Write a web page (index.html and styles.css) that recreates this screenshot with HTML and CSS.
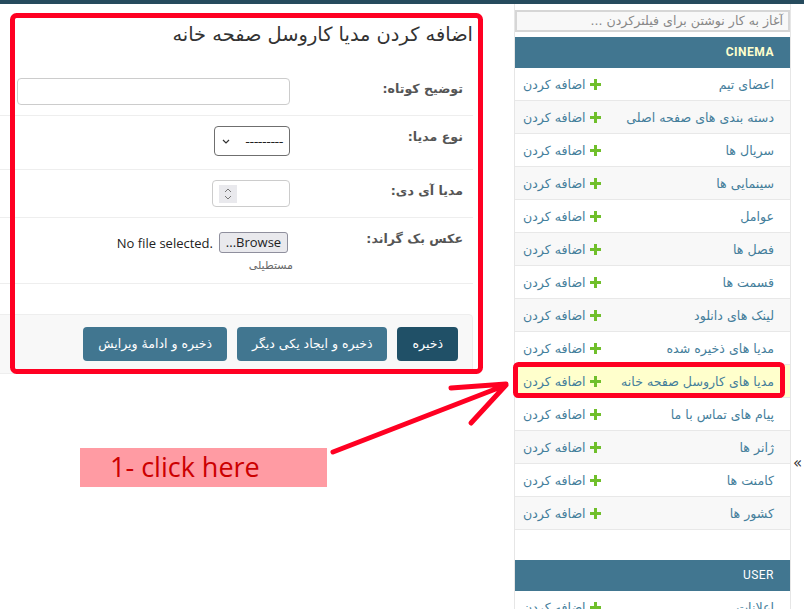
FILE: index.html
```html
<!DOCTYPE html>
<html lang="fa">
<head>
<meta charset="utf-8">
<title>اضافه کردن مدیا کاروسل صفحه خانه</title>
<link rel="stylesheet" href="styles.css">
</head>
<body>
<div class="topbar"></div>
<div class="page">
  <main class="content" dir="rtl">
    <h1 class="title">اضافه کردن مدیا کاروسل صفحه خانه</h1>
    <form class="form">
      <fieldset class="fieldset">
        <div class="form-row row-desc">
          <label class="label">توضیح کوتاه:</label>
          <div class="field"><div class="text-input"></div></div>
        </div>
        <div class="form-row row-type">
          <label class="label">نوع مدیا:</label>
          <div class="field">
            <div class="select"><span class="select-value">---------</span>
              <svg class="chev" width="8" height="5" viewBox="0 0 8 5"><path d="M1 1l3 3 3-3" fill="none" stroke="#333" stroke-width="1.2"/></svg>
            </div>
          </div>
        </div>
        <div class="form-row row-id">
          <label class="label">مدیا آی دی:</label>
          <div class="field">
            <div class="number-input"><span class="spinner">
              <svg width="18" height="18" viewBox="0 0 18 18"><path d="M6 7l3-3 3 3M6 11l3 3 3-3" fill="none" stroke="#777" stroke-width="1"/></svg>
            </span></div>
          </div>
        </div>
        <div class="form-row row-file">
          <label class="label">عکس بک گراند:</label>
          <div class="field file-field">
            <div class="file-line"><span class="browse">Browse...</span><span class="nofile" dir="ltr">No file selected.</span></div>
            <div class="help">مستطیلی</div>
          </div>
        </div>
      </fieldset>
      <div class="submit-row">
        <span class="btn btn-primary">ذخیره</span>
        <span class="btn">ذخیره و ایجاد یکی دیگر</span>
        <span class="btn">ذخیره و ادامهٔ ویرایش</span>
      </div>
    </form>
  </main>
  <nav class="sidebar" dir="rtl">
    <div class="filter">آغاز به کار نوشتن برای فیلترکردن ...</div>
    <div class="module current">
      <div class="caption">Cinema</div>
      <div class="mrow"><span class="name">اعضای تیم</span><span class="add"><svg class="plus" width="11" height="11" viewBox="0 0 11 11"><path d="M4 0h3v4h4v3H7v4H4V7H0V4h4z" fill="#70bf2b"/></svg>اضافه کردن</span></div>
      <div class="mrow"><span class="name">دسته بندی های صفحه اصلی</span><span class="add"><svg class="plus" width="11" height="11" viewBox="0 0 11 11"><path d="M4 0h3v4h4v3H7v4H4V7H0V4h4z" fill="#70bf2b"/></svg>اضافه کردن</span></div>
      <div class="mrow"><span class="name">سریال ها</span><span class="add"><svg class="plus" width="11" height="11" viewBox="0 0 11 11"><path d="M4 0h3v4h4v3H7v4H4V7H0V4h4z" fill="#70bf2b"/></svg>اضافه کردن</span></div>
      <div class="mrow"><span class="name">سینمایی ها</span><span class="add"><svg class="plus" width="11" height="11" viewBox="0 0 11 11"><path d="M4 0h3v4h4v3H7v4H4V7H0V4h4z" fill="#70bf2b"/></svg>اضافه کردن</span></div>
      <div class="mrow"><span class="name">عوامل</span><span class="add"><svg class="plus" width="11" height="11" viewBox="0 0 11 11"><path d="M4 0h3v4h4v3H7v4H4V7H0V4h4z" fill="#70bf2b"/></svg>اضافه کردن</span></div>
      <div class="mrow"><span class="name">فصل ها</span><span class="add"><svg class="plus" width="11" height="11" viewBox="0 0 11 11"><path d="M4 0h3v4h4v3H7v4H4V7H0V4h4z" fill="#70bf2b"/></svg>اضافه کردن</span></div>
      <div class="mrow"><span class="name">قسمت ها</span><span class="add"><svg class="plus" width="11" height="11" viewBox="0 0 11 11"><path d="M4 0h3v4h4v3H7v4H4V7H0V4h4z" fill="#70bf2b"/></svg>اضافه کردن</span></div>
      <div class="mrow"><span class="name">لینک های دانلود</span><span class="add"><svg class="plus" width="11" height="11" viewBox="0 0 11 11"><path d="M4 0h3v4h4v3H7v4H4V7H0V4h4z" fill="#70bf2b"/></svg>اضافه کردن</span></div>
      <div class="mrow"><span class="name">مدیا های ذخیره شده</span><span class="add"><svg class="plus" width="11" height="11" viewBox="0 0 11 11"><path d="M4 0h3v4h4v3H7v4H4V7H0V4h4z" fill="#70bf2b"/></svg>اضافه کردن</span></div>
      <div class="mrow selected"><span class="name">مدیا های کاروسل صفحه خانه</span><span class="add"><svg class="plus" width="11" height="11" viewBox="0 0 11 11"><path d="M4 0h3v4h4v3H7v4H4V7H0V4h4z" fill="#70bf2b"/></svg>اضافه کردن</span></div>
      <div class="mrow"><span class="name">پیام های تماس با ما</span><span class="add"><svg class="plus" width="11" height="11" viewBox="0 0 11 11"><path d="M4 0h3v4h4v3H7v4H4V7H0V4h4z" fill="#70bf2b"/></svg>اضافه کردن</span></div>
      <div class="mrow"><span class="name">ژانر ها</span><span class="add"><svg class="plus" width="11" height="11" viewBox="0 0 11 11"><path d="M4 0h3v4h4v3H7v4H4V7H0V4h4z" fill="#70bf2b"/></svg>اضافه کردن</span></div>
      <div class="mrow"><span class="name">کامنت ها</span><span class="add"><svg class="plus" width="11" height="11" viewBox="0 0 11 11"><path d="M4 0h3v4h4v3H7v4H4V7H0V4h4z" fill="#70bf2b"/></svg>اضافه کردن</span></div>
      <div class="mrow"><span class="name">کشور ها</span><span class="add"><svg class="plus" width="11" height="11" viewBox="0 0 11 11"><path d="M4 0h3v4h4v3H7v4H4V7H0V4h4z" fill="#70bf2b"/></svg>اضافه کردن</span></div>
    </div>
    <div class="module">
      <div class="caption">User</div>
      <div class="mrow"><span class="name">اعلانات</span><span class="add"><svg class="plus" width="11" height="11" viewBox="0 0 11 11"><path d="M4 0h3v4h4v3H7v4H4V7H0V4h4z" fill="#70bf2b"/></svg>اضافه کردن</span></div>
    </div>
  </nav>
  <div class="toggle">«</div>
</div>

<svg class="marks" width="804" height="609" viewBox="0 0 804 609">
  <rect x="12.5" y="15.5" width="468" height="356" rx="4" fill="none" stroke="#ff0022" stroke-width="5"/>
  <rect x="515.5" y="364.5" width="267" height="31" rx="3" fill="none" stroke="#ff0022" stroke-width="5"/>
  <path d="M333 452L506 385M451 388L506 384M471 423L506 385" fill="none" stroke="#ff0022" stroke-width="5" stroke-linecap="round"/>
</svg>
<div class="note">1- click here</div>
</body>
</html>
```

FILE: styles.css
```css
html, body {
  margin: 0;
  padding: 0;
}
body {
  width: 804px;
  height: 609px;
  overflow: hidden;
  background: #fff;
  color: #333;
  font-family: "DejaVu Sans", sans-serif;
  position: relative;
}
.topbar {
  height: 4px;
  background: #264b5d;
}
.page {
  display: flex;
  align-items: flex-start;
}

/* main form */
.content {
  flex: none;
  width: 483px;
  margin-left: -10px;
  margin-right: 41px;
}
.title {
  margin: 19px 0 21px;
  font-size: 19.4px;
  line-height: 24px;
  font-weight: normal;
  color: #333;
  text-align: right;
}
.form { margin: 0; }
.fieldset {
  border: none;
  margin: 0;
  padding: 0;
  min-width: 0;
}
.form-row {
  display: flex;
  gap: 3px;
  padding: 10px;
  border-bottom: 1px solid #eee;
}
.row-type { padding-bottom: 13px; }
.label {
  flex: none;
  width: 170px;
  padding-top: 3px;
  font-size: 12.6px;
  line-height: 16px;
  font-weight: bold;
  color: #555;
}
.text-input {
  width: 273px;
  height: 27px;
  box-sizing: border-box;
  border: 1px solid #ccc;
  border-radius: 4px;
}
.select {
  width: 76px;
  height: 30px;
  box-sizing: border-box;
  border: 1px solid #6f6f6f;
  border-radius: 4px;
  display: flex;
  align-items: center;
  justify-content: space-between;
  padding: 0 6px 0 7px;
  font-size: 13px;
  color: #222;
}
.select-value { letter-spacing: -0.5px; }
.chev { display: block; }
.number-input {
  width: 78px;
  height: 27px;
  box-sizing: border-box;
  border: 1px solid #ccc;
  border-radius: 4px;
  display: flex;
  align-items: center;
  justify-content: flex-end;
  padding-left: 6px;
}
.spinner {
  display: block;
  width: 18px;
  height: 18px;
  background: #e9e9ed;
}
.spinner svg { display: block; }
.file-field { padding-top: 4px; }
.file-line {
  display: flex;
  align-items: center;
  gap: 6px;
  font-family: "Open Sans", "DejaVu Sans", sans-serif;
  font-size: 13px;
  color: #222;
}
.browse {
  display: block;
  width: 69px;
  height: 21px;
  box-sizing: border-box;
  margin-right: 2px;
  border: 1px solid #8f8f9d;
  border-radius: 3px;
  background: #e9e9ed;
  text-align: center;
  line-height: 19px;
}
.help {
  margin-top: 6px;
  margin-right: -3px;
  font-size: 11px;
  line-height: 14px;
  color: #666;
}
.submit-row {
  display: flex;
  gap: 10px;
  margin-top: 30px;
  padding: 12px 14px;
  background: #f8f8f8;
  border: 1px solid #eee;
  border-radius: 4px;
}
.btn {
  display: block;
  padding: 10px 15px;
  font-size: 12.5px;
  line-height: 14px;
  color: #fff;
  background: #417690;
  border-radius: 4px;
}
.btn-primary { background: #205067; }

/* sidebar */
.sidebar {
  flex: none;
  width: 275px;
  height: 605px;
  border-left: 1px solid #e6e6e6;
  border-right: 1px solid #e6e6e6;
}
.filter {
  margin: 6px 0 5px;
  height: 22px;
  box-sizing: border-box;
  border: 2px solid #d6d6d6;
  background: #f8f8f8;
  padding: 0 5px;
  font-size: 12.6px;
  line-height: 18px;
  color: #888;
  white-space: nowrap;
  overflow: hidden;
}
.module { margin-bottom: 30px; }
.caption {
  background: #417690;
  color: #fff;
  font-family: Roboto, "DejaVu Sans", sans-serif;
  font-size: 12px;
  line-height: 15px;
  padding: 8px 16px 8px 8px;
  text-transform: uppercase;
  letter-spacing: 0.5px;
}
.current .caption {
  color: #ffc;
  font-weight: bold;
}
.mrow {
  display: flex;
  justify-content: space-between;
  align-items: center;
  height: 32px;
  border-bottom: 1px solid #e8e8e8;
  padding: 0 16px 0 8px;
  font-size: 12.6px;
  color: #447e9b;
  white-space: nowrap;
}
.mrow:nth-child(odd) { background: #f8f8f8; }
.mrow.selected { background: #ffc; }
.add {
  display: flex;
  align-items: center;
  gap: 4px;
}
.plus { display: block; }

.toggle {
  flex: none;
  width: 13px;
  padding-top: 450px;
  text-align: center;
  font-size: 15px;
  color: #333;
}

/* annotations overlay */
.marks {
  position: absolute;
  left: 0;
  top: 0;
  pointer-events: none;
}
.note {
  position: absolute;
  left: 80px;
  top: 448px;
  width: 247px;
  height: 39px;
  box-sizing: border-box;
  padding-left: 30px;
  background: #ff9ba3;
  color: #cc0000;
  font-family: "Open Sans", sans-serif;
  font-size: 27px;
  line-height: 37px;
}
```
